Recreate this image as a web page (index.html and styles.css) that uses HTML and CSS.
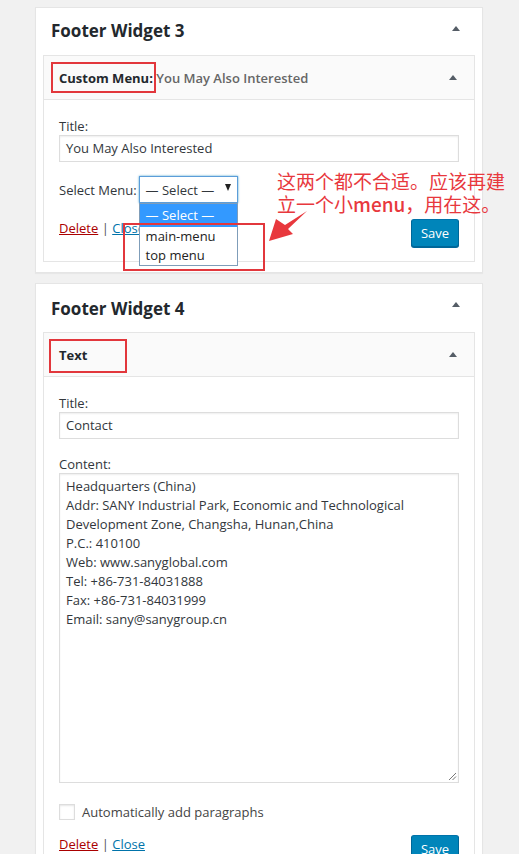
FILE: index.html
```html
<!DOCTYPE html>
<html>
<head>
<meta charset="utf-8">
<link rel="stylesheet" href="styles.css">
</head>
<body>
<div class="page">
  <div class="sidebar">
    <section class="panel">
      <div class="panel-head">
        <h2 class="panel-title">Footer Widget 3</h2>
        <span class="tri"></span>
      </div>
      <div class="widget">
        <div class="widget-top">
          <span class="wt-title"><b>Custom Menu:</b> <span class="in-title">You May Also Interested</span></span>
          <span class="tri tri-sm"></span>
        </div>
        <div class="widget-inside">
          <div class="label">Title:</div>
          <div class="field">You May Also Interested</div>
          <div class="select-row">
            <span class="select-label">Select Menu:</span>
            <div class="select">
              <span class="select-val">— Select —</span>
              <span class="select-arrow"></span>
              <ul class="dropdown">
                <li class="opt opt-sel">— Select —</li>
                <li class="opt">main-menu</li>
                <li class="opt">top menu</li>
              </ul>
            </div>
          </div>
          <div class="controls controls-1">
            <div class="links"><a class="del">Delete</a> <span class="sep">|</span> <a class="close">Close</a></div>
            <button class="save">Save</button>
          </div>
        </div>
      </div>
    </section>

    <section class="panel panel-2">
      <div class="panel-head">
        <h2 class="panel-title">Footer Widget 4</h2>
        <span class="tri"></span>
      </div>
      <div class="widget">
        <div class="widget-top">
          <span class="wt-title"><b>Text</b></span>
          <span class="tri tri-sm"></span>
        </div>
        <div class="widget-inside">
          <div class="label">Title:</div>
          <div class="field">Contact</div>
          <div class="label label-gap">Content:</div>
          <div class="textarea">
            <div>Headquarters (China)</div>
            <div>Addr: SANY Industrial Park, Economic and Technological</div>
            <div>Development Zone, Changsha, Hunan,China</div>
            <div>P.C.: 410100</div>
            <div>Web: www.sanyglobal.com</div>
            <div>Tel: +86-731-84031888</div>
            <div>Fax: +86-731-84031999</div>
            <div>Email: sany@sanygroup.cn</div>
            <svg class="grip" width="9" height="9" viewBox="0 0 9 9"><path d="M8 1 L1 8 M8 4.5 L4.5 8" stroke="#777" stroke-width="1"/></svg>
          </div>
          <div class="check-row">
            <span class="checkbox"></span>
            <span class="check-label">Automatically add paragraphs</span>
          </div>
          <div class="controls">
            <div class="links"><a class="del">Delete</a> <span class="sep">|</span> <a class="close">Close</a></div>
            <button class="save">Save</button>
          </div>
        </div>
      </div>
    </section>
  </div>

  <div class="mark mark-1"></div>
  <div class="mark mark-2"></div>
  <div class="mark mark-3"></div>
  <div class="note">这两个都不合适。应该再建<br>立一个小<b class="note-en">menu</b>，用在这。</div>
  <svg class="arrow" width="519" height="300" viewBox="0 0 519 300">
    <polygon points="269,241 276,219 285,225 307,211 288,229 293,234" fill="#e8383d"/>
  </svg>
</div>
</body>
</html>
```

FILE: styles.css
```css
* { box-sizing: border-box; }
html, body { margin: 0; padding: 0; }
body {
  background: #f1f1f1;
  font-family: "Open Sans", "Liberation Sans", sans-serif;
  font-size: 13px;
  color: #32373c;
  width: 519px;
  height: 854px;
  overflow: hidden;
}
.page {
  position: relative;
  padding: 7px 0 0 35px;
}
.sidebar {
  width: 448px;
  display: flex;
  flex-direction: column;
  gap: 10px;
}
.panel {
  background: #fff;
  border: 1px solid #e5e5e5;
  box-shadow: 0 1px 1px rgba(0,0,0,.04);
  padding-bottom: 10px;
}
.panel-head {
  height: 47px;
  display: flex;
  justify-content: space-between;
  align-items: flex-start;
  padding: 13px 22px 0 15px;
}
.panel-2 .panel-head { height: 48px; padding-top: 15px; }
.panel-title {
  margin: 0;
  font-size: 17px;
  line-height: 20px;
  font-weight: 700;
  color: #23282d;
}
.tri {
  width: 0; height: 0;
  border-left: 4px solid transparent;
  border-right: 4px solid transparent;
  border-bottom: 5px solid #555d66;
  margin-top: 5px;
}
.panel-2 .tri { margin-top: 3px; }
.tri-sm, .panel-2 .tri-sm { margin-top: 0; }
.widget {
  margin: 0 7px;
  border: 1px solid #e5e5e5;
  background: #fff;
}
.widget-top {
  height: 44px;
  background: #fafafa;
  border-bottom: 1px solid #e5e5e5;
  display: flex;
  align-items: center;
  justify-content: space-between;
  padding: 0 17px 0 15px;
}
.wt-title { font-size: 13px; color: #23282d; }
.wt-title b { font-weight: 700; }
.in-title { color: #666; font-weight: 600; }
.widget-inside {
  padding: 17px 15px 14px;
}
.label {
  line-height: 18px;
  color: #32373c;
}
.label-gap { margin-top: 16px; }
.field {
  height: 27px;
  border: 1px solid #ddd;
  box-shadow: inset 0 1px 2px rgba(0,0,0,.07);
  padding: 0 6px;
  line-height: 25px;
  color: #32373c;
}
.select-row {
  margin-top: 14px;
  display: flex;
  align-items: center;
  gap: 2px;
}
.select {
  position: relative;
  width: 99px;
  height: 27px;
  border: 1px solid #5b9dd9;
  box-shadow: 0 0 2px rgba(30,140,190,.8);
  padding: 0 6px;
  display: flex;
  align-items: center;
  justify-content: space-between;
  background: #fff;
}
.select-arrow {
  width: 0; height: 0;
  border-left: 3px solid transparent;
  border-right: 3px solid transparent;
  border-top: 7px solid #222;
  margin-top: -5px;
}
.dropdown {
  position: absolute;
  left: -1px;
  top: 26px;
  width: 99px;
  margin: 0;
  padding: 0;
  list-style: none;
  background: #fff;
  border: 1px solid #7f9db9;
  z-index: 2;
}
.opt {
  height: 19px;
  line-height: 19px;
  padding: 0 6px;
  color: #222;
}
.opt-sel {
  height: 23px;
  line-height: 23px;
  background: #3399ff;
  color: #fff;
}
.controls {
  margin-top: 16px;
  display: flex;
  justify-content: space-between;
  align-items: flex-start;
}
.links { padding-top: 1px; line-height: 16px; color: #555; }
.del { color: #a00; text-decoration: underline; }
.close { color: #0073aa; text-decoration: underline; }
.sep { color: #555; }
.save {
  width: 48px;
  height: 28px;
  background: #0085ba;
  border: 1px solid #0073aa;
  border-color: #0073aa #006799 #006799;
  border-radius: 3px;
  box-shadow: 0 1px 0 #006799;
  color: #fff;
  font-family: inherit;
  font-size: 13px;
  padding: 0;
  margin: 0;
}
.textarea {
  position: relative;
  height: 310px;
  border: 1px solid #ddd;
  box-shadow: inset 0 1px 2px rgba(0,0,0,.07);
  padding: 3px 6px;
  line-height: 19px;
  color: #32373c;
}
.grip { position: absolute; right: 1px; bottom: 1px; }
.check-row {
  margin-top: 20px;
  display: flex;
  align-items: center;
  gap: 7px;
}
.checkbox {
  width: 16px; height: 16px;
  border: 1px solid #ddd;
  box-shadow: inset 0 1px 2px rgba(0,0,0,.1);
  background: #fff;
}
.check-label { color: #444; }
.check-row + .controls { margin-top: 14px; }
.mark {
  position: absolute;
  border: 2px solid #e2373c;
}
.mark-1 { left: 51px; top: 62px; width: 105px; height: 31px; }
.mark-2 { left: 123px; top: 223px; width: 142px; height: 48px; z-index: 3; }
.mark-3 { left: 49px; top: 339px; width: 78px; height: 34px; }
.note {
  position: absolute;
  left: 277px;
  top: 169px;
  font-family: "Noto Sans CJK SC", sans-serif;
  font-size: 19px;
  line-height: 23px;
  color: #e8383d;
  white-space: nowrap;
}
.note-en { font-weight: 500; }
.arrow { position: absolute; left: 0; top: 0; }
```
